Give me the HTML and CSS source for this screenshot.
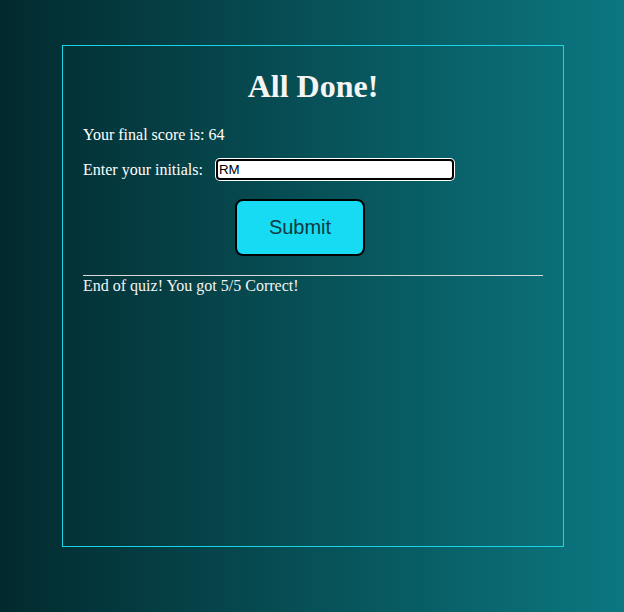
FILE: index.html
```html
<!DOCTYPE html>
<html>
<head>
<meta charset="utf-8">
<link rel="stylesheet" href="styles.css">
</head>
<body>
<main class="card">
  <h1 class="title">All Done!</h1>
  <p class="score">Your final score is: 64</p>
  <form class="form">
    <div class="row">
      <label class="label" for="initials">Enter your initials:</label>
      <input class="input" id="initials" type="text" value="RM">
    </div>
    <button class="submit" type="button">Submit</button>
  </form>
  <hr class="rule">
  <p class="result">End of quiz! You got 5/5 Correct!</p>
</main>
</body>
</html>
```
FILE: styles.css
```css
html, body {
  margin: 0;
  height: 100%;
}
body {
  background: linear-gradient(to right, #022a2e, #0c7780);
  font-family: "Liberation Serif", "Times New Roman", serif;
  font-size: 16px;
  color: #ffffff;
  padding-top: 45px;
  box-sizing: border-box;
}
.card {
  width: 460px;
  height: 500px;
  margin: 0 auto;
  padding: 0 20px;
  border: 1px solid #1ad3e6;
  box-sizing: content-box;
  position: relative;
  left: 1px;
}
.title {
  margin: 22px 0 0;
  font-size: 32px;
  line-height: 37px;
  text-align: center;
  font-weight: bold;
  color: #f4f4f4;
}
.score {
  margin: 21px 0 0;
  line-height: 18px;
}
.form {
  margin: 15px 0 0;
}
.row {
  display: flex;
  align-items: center;
  height: 21px;
}
.label {
  margin-right: 13px;
}
.input {
  width: 238px;
  height: 21px;
  box-sizing: border-box;
  border: 2px solid #000;
  border-radius: 4px;
  box-shadow: 0 0 0 1px #fff;
  background: #fff;
  padding: 0 1px;
  font-family: "Liberation Sans", Arial, sans-serif;
  font-size: 13.33px;
  color: #000;
  outline: none;
}
.submit {
  display: block;
  margin: 19px 0 0 152px;
  width: 130px;
  height: 57px;
  background: #17dbf2;
  border: 2px solid #000;
  border-radius: 8px;
  font-family: "Liberation Sans", Arial, sans-serif;
  font-size: 20px;
  color: #0d3a40;
  padding: 0;
}
.rule {
  margin: 19px 0 0;
  border: 0;
  border-top: 1px solid #d8d8d8;
  height: 0;
}
.result {
  margin: 1px 0 0;
  line-height: 18px;
  color: #f4f4f4;
}
```
